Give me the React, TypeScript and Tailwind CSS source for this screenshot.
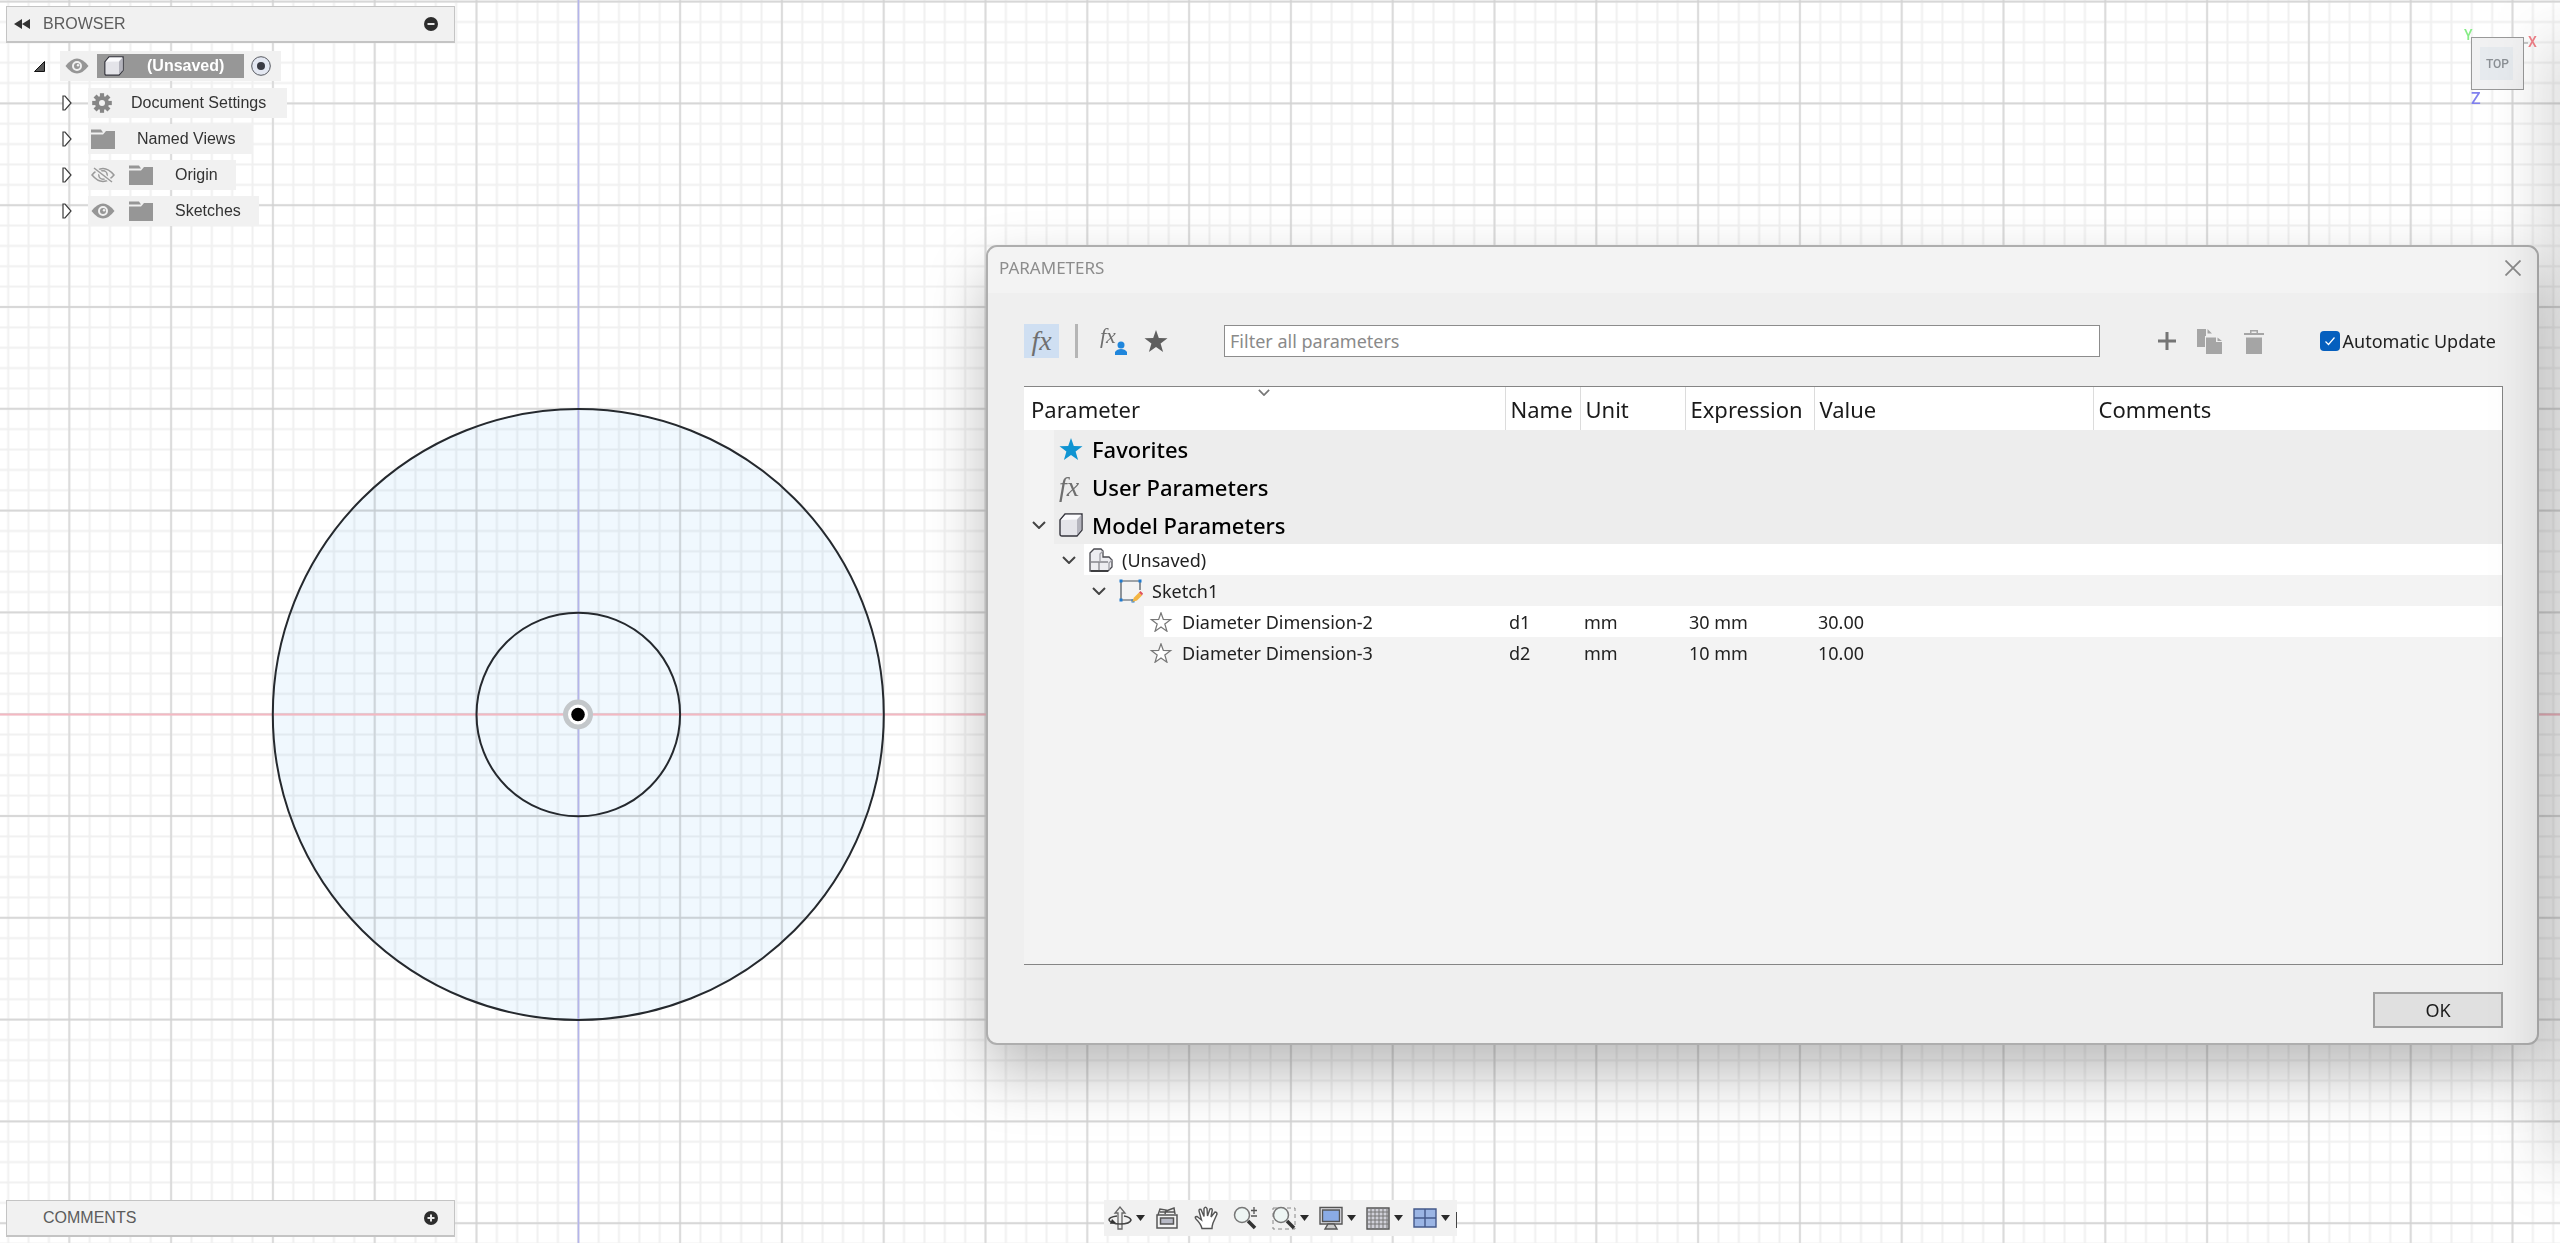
// src/App.tsx
import React from 'react';

type IconProps = { className?: string };

const EyeIcon: React.FC<{ hidden?: boolean }> = ({ hidden }) => (
  <svg className="h-4 w-6 shrink-0" viewBox="0 0 24 16">
    {hidden ? (
      <g fill="none" stroke="#9a9a9a" strokeWidth="1.5">
        <path d="M1 8 Q12 -5 23 8 Q12 21 1 8Z" />
        <circle cx="12" cy="8" r="4.2" />
        <path d="M3 1 L21 15" stroke="#f1f1f1" strokeWidth="4" />
        <path d="M3 1 L21 15" />
      </g>
    ) : (
      <g>
        <path d="M0.5 8 Q12 -7 23.5 8 Q12 23 0.5 8Z" fill="#969696" />
        <circle cx="12" cy="8" r="4" fill="#969696" stroke="#f1f1f1" strokeWidth="2" />
        <circle cx="13" cy="7.2" r="1.2" fill="#f1f1f1" />
      </g>
    )}
  </svg>
);

const FolderIcon: React.FC = () => (
  <svg className="h-5 w-6 shrink-0" viewBox="0 0 24 20" fill="#969696">
    <path d="M0 0.5 H10 L12 3.500 H0Z" />
    <path d="M0 5.5 H12 L15 2 H24 V20 H0Z" />
  </svg>
);

const GearIcon: React.FC = () => (
  <svg className="h-5 w-5 shrink-0" viewBox="-10 -10 20 20" fill="#868686">
    {[0, 45, 90, 135].map((angle) => (
      <rect key={angle} x="-2.1" y="-9.8" width="4.2" height="19.6" transform={`rotate(${angle})`} />
    ))}
    <circle r="7" />
    <circle r="3" fill="#f1f1f1" />
  </svg>
);

const CubeIcon: React.FC<IconProps> = ({ className }) => (
  <svg className={className} viewBox="0 0 24 24">
    <path d="M1 7 L6 1 H23 V17 L18 23 H3 Q1 23 1 21Z" fill="#e4e4e9" stroke="#34343c" strokeWidth="1.4" />
    <path d="M2 7 L6.500 1.800 H22 L18 6.500Z" fill="#fbfbfd" />
    <path d="M18 6.500 L22.300 2 V17 L18 22Z" fill="#b4b4bd" />
  </svg>
);

const ComponentIcon: React.FC = () => (
  <svg className="h-6 w-6 shrink-0" viewBox="0 0 24 24" strokeWidth="1.3" stroke="#4a4a50">
    <path d="M1 5 L5 1 H12 L14 3 V9 H20 L23 12 V19 L19 23 H1Z" fill="#ededf1" />
    <path d="M14 3 L11 6 V13 M23 12 L20 15 V22" fill="none" stroke="#a0a0a8" />
    <path d="M1 14 H19 M10 14 V23" fill="none" stroke="#85858c" />
    <path d="M2 23 H19" stroke="#222" />
  </svg>
);

const SketchIcon: React.FC = () => (
  <svg className="h-6 w-6 shrink-0" viewBox="0 0 24 24">
    <path d="M2 2 H21 V11 M2 2 V21 H14" fill="none" stroke="#48525c" strokeWidth="1.2" />
    <g fill="#1f7ad0">
      <rect x="0.500" y="0.500" width="3" height="3" />
      <rect x="19.500" y="0.500" width="3" height="3" />
      <rect x="0.500" y="19.500" width="3" height="3" />
      <rect x="12.500" y="20.500" width="3" height="3" />
    </g>
    <path d="M13 23 L15 18.500 L20 13.500 L23 16.500 L18 21.500Z" fill="#f3b544" />
    <path d="M20 13.500 L21.500 12 L24 14.500 L23 16.500Z" fill="#e0505a" />
  </svg>
);

const starPath = 'M12 1 L14.800 9 L23.500 9.200 L16.600 14.400 L19.100 23 L12 17.900 L4.900 23 L7.400 14.400 L0.500 9.200 L9.200 9Z';

const StarIcon: React.FC<IconProps> = ({ className }) => (
  <svg className={className} viewBox="0 0 24 24">
    <path d={starPath} />
  </svg>
);

const FxLabel: React.FC<IconProps> = ({ className }) => (
  <span className={`font-['Liberation_Serif',serif] italic text-[#6f6f6f] ${className}`}>fx</span>
);

const ChevronDown: React.FC<IconProps> = ({ className }) => (
  <svg className={className} viewBox="0 0 14 8" fill="none" stroke="currentColor" strokeWidth="2">
    <path d="M1 1 L7 7 L13 1" />
  </svg>
);

// Grid, axes and the sketched ring. The origin of the pattern is the sketch origin.
const SketchCanvas: React.FC = () => (
  <svg className="absolute inset-0 h-full w-full" aria-hidden="true">
    <defs>
      <pattern id="minor" x="568.12" y="704.02" width="20.36" height="20.36" patternUnits="userSpaceOnUse">
        <path d="M0 10.18 H20.36 M10.18 0 V20.36" stroke="#f0f0f0" strokeWidth="2" fill="none" />
      </pattern>
      <pattern id="major" x="527.4" y="663.3" width="101.8" height="101.8" patternUnits="userSpaceOnUse">
        <path d="M0 50.9 H101.8 M50.9 0 V101.8" stroke="#d0d0d0" strokeWidth="1.3" fill="none" />
      </pattern>
    </defs>
    <rect width="100%" height="100%" fill="#fff" />
    <circle cx="578.3" cy="714.2" r="305.5" fill="#f0f8fe" />
    <g className="mix-blend-multiply">
      <rect width="100%" height="100%" fill="url(#minor)" />
      <rect width="100%" height="100%" fill="url(#major)" />
    </g>
    <path d="M0 714.5 H2560" stroke="#f4b8c2" strokeWidth="2" />
    <path d="M578.5 0 V1243" stroke="#b4b4ec" strokeWidth="1.6" />
    <g fill="none" stroke="#25292e" strokeWidth="2">
      <circle cx="578.3" cy="714.5" r="305.5" />
      <circle cx="578.3" cy="714.5" r="101.8" />
    </g>
    <circle cx="578" cy="714.500" r="12.500" fill="#fff" stroke="#c3c7ca" strokeWidth="5" />
    <circle cx="578" cy="714.500" r="6.800" fill="#000" />
  </svg>
);

const ViewCube: React.FC = () => (
  <svg className="h-[80px] w-[76px]" viewBox="0 0 76 80" fontFamily="Roboto, sans-serif">
    <rect x="9.500" y="10.500" width="52" height="52" fill="#f1f1f2" stroke="#999" />
    <rect x="18" y="20" width="33" height="33" fill="#e6eaee" />
    <text x="35.500" y="41" fontSize="12" fontWeight="500" fill="#8b9095" textAnchor="middle">TOP</text>
    <text x="2" y="13" fontSize="14" fontWeight="500" fill="#86ec86">Y</text>
    <text x="66" y="20" fontSize="14" fontWeight="500" fill="#f08088">X</text>
    <text x="9" y="77" fontSize="16" fontWeight="500" fill="#8080ee">Z</text>
    <path d="M62 16 H66" stroke="#999" />
  </svg>
);

interface PanelBarProps {
  title: string;
  sign: 'minus' | 'plus';
  collapsible?: boolean;
}

const PanelBar: React.FC<PanelBarProps> = ({ title, sign, collapsible }) => (
  <div className="flex h-[37px] w-[449px] items-center border border-b-2 border-[#c4c4c4] bg-[#f1f1f1] pr-4 pl-[7px]">
    <button className="h-4 w-4" aria-label={`Collapse ${title}`}>
      {collapsible && (
        <svg viewBox="0 0 16 16" fill="#333">
          <path d="M8 3 V13 L0 8Z M16 3 V13 L8 8Z" />
        </svg>
      )}
    </button>
    <span className="ml-[13px] flex-1 text-[16px] text-[#5c5c5c]">{title}</span>
    <button className="h-[14px] w-[14px]" aria-label={sign === 'minus' ? 'Minimize' : 'Expand'}>
      <svg viewBox="0 0 14 14">
        <circle cx="7" cy="7" r="7" fill="#2d2d2d" />
        <path d={sign === 'minus' ? 'M3.500 7 H10.500' : 'M3.500 7 H10.500 M7 3.500 V10.500'} stroke="#e8e8e8" strokeWidth="2" />
      </svg>
    </button>
  </div>
);

interface BrowserRowProps {
  label: string;
  icons: React.ReactNode;
  labelClass: string;
}

const BrowserRow: React.FC<BrowserRowProps> = ({ label, icons, labelClass }) => (
  <li className="flex h-[30px] items-center">
    <button className="flex w-[27px] shrink-0 pl-px" aria-label={`Expand ${label}`}>
      <svg className="h-4 w-[10px]" viewBox="0 0 10 16" fill="#fff" stroke="#3a3a3a" strokeWidth="1.2">
        <path d="M1 1 H3 L9 8 L3 15 H1Z" />
      </svg>
    </button>
    <div className="flex h-full items-center bg-[#f1f1f1]">
      {icons}
      <span className={labelClass}>{label}</span>
    </div>
  </li>
);

const BrowserPanel: React.FC = () => (
  <section className="pt-[6px] pl-[6px]">
    <PanelBar title="BROWSER" sign="minus" collapsible />
    <div className="mt-2 ml-7 flex h-[30px] items-center">
      <button className="flex w-[26px]" aria-label="Collapse document">
        <svg className="h-[11px] w-[11px]" viewBox="0 0 11 11">
          <path d="M10.500 0.500 V10.500 H0.500Z" fill="#555" stroke="#111" />
        </svg>
      </button>
      <div className="flex h-full items-center bg-[#f1f1f1] pr-[10px] pl-[5px]">
        <EyeIcon />
        <div className="ml-2 flex h-6 w-[147px] items-center bg-[#979797] pl-[7px]">
          <CubeIcon className="h-5 w-5" />
          <span className="ml-[23px] text-[16px] font-bold text-white">(Unsaved)</span>
        </div>
        <svg className="ml-[7px] h-5 w-5" viewBox="0 0 20 20">
          <circle cx="10" cy="10" r="9.300" fill="#e4e8f2" stroke="#55585f" />
          <circle cx="10" cy="10" r="4" fill="#3a3c44" />
        </svg>
      </div>
    </div>
    <ul className="mt-[7px] ml-[55px] flex flex-col gap-[6px] text-[16px] text-[#333]">
      <BrowserRow label="Document Settings" icons={<span className="pl-1"><GearIcon /></span>} labelClass="pr-[21px] pl-[19px]" />
      <BrowserRow label="Named Views" icons={<span className="pl-[3px]"><FolderIcon /></span>} labelClass="pr-[18px] pl-[22px]" />
      <BrowserRow
        label="Origin"
        icons={<span className="flex items-center gap-[14px] pl-[3px]"><EyeIcon hidden /><FolderIcon /></span>}
        labelClass="pr-[18px] pl-[22px]"
      />
      <BrowserRow
        label="Sketches"
        icons={<span className="flex items-center gap-[14px] pl-[3px]"><EyeIcon /><FolderIcon /></span>}
        labelClass="pr-[18px] pl-[22px]"
      />
    </ul>
  </section>
);

interface Tool {
  name: string;
  menu: boolean;
  art: React.ReactNode;
}

const lens = (
  <>
    <circle cx="9" cy="9" r="7.500" fill="#eef6f4" stroke="#777" strokeWidth="1.500" />
    <path d="M15 15 L22 22" stroke="#333" strokeWidth="3.500" />
  </>
);

const tools: Tool[] = [
  {
    name: 'Orbit',
    menu: true,
    art: (
      <g fill="#eee" stroke="#666" strokeWidth="1.300">
        <path d="M10 23 V7 H7 L12 1 L17 7 H14 V23Z" />
        <path d="M9 10 Q1 11 1 14 Q3 18 12 18 Q22 18 23 14 Q22 11 16 10" fill="none" stroke="#444" strokeWidth="1.600" />
        <path d="M2 18 L8 17 L4 13Z" fill="#333" stroke="none" />
      </g>
    ),
  },
  {
    name: 'Look At',
    menu: false,
    art: (
      <g fill="none" stroke="#555" strokeWidth="1.500">
        <path d="M2 9 H22 V22 H2Z" fill="#f4f4f4" />
        <path d="M3 9 L5 3 L11 4 L10 8 M11 5 L19 2 L20 8 M5 6 H19" />
        <path d="M5.500 12 H18.500 V18 H5.500Z" fill="#b8bac6" />
      </g>
    ),
  },
  {
    name: 'Pan',
    menu: false,
    art: (
      <path
        d="M8 22.500 Q7 18 2 13 Q0 10.500 3 10.500 L7.500 14 L5 5 Q5 2.500 7 3.500 L10 10.500 L10 2.500 Q11.500 0 13 2.500 L13.500 10 L16 3 Q18 2 18.300 4 L17 11 L21 6 Q23 6 23 8 L19 17 Q18 20 18 22.500Z"
        fill="#fff"
        stroke="#555"
        strokeWidth="1.400"
      />
    ),
  },
  {
    name: 'Zoom',
    menu: false,
    art: <>{lens}<path d="M21 1 V8 M18 4.500 H24 M18 10 H24" stroke="#555" strokeWidth="1.300" /></>,
  },
  {
    name: 'Zoom Window',
    menu: true,
    art: <><path d="M1 2 H23 V23 H1Z" fill="none" stroke="#888" strokeDasharray="4 3" />{lens}</>,
  },
  {
    name: 'Display Settings',
    menu: true,
    art: (
      <g stroke="#555" strokeWidth="1.400">
        <path d="M1 1.500 H23 V18 H1Z" fill="#e8e8ee" />
        <path d="M3.500 4 H20.500 V15.500 H3.500Z" fill="#8aabe6" />
        <path d="M9 18 H15 L18 23 H6Z" fill="#ccc" />
      </g>
    ),
  },
  {
    name: 'Grid and Snaps',
    menu: true,
    art: (
      <g>
        <path d="M1 2 H23 V23 H1Z" fill="#d0d0d8" stroke="#555" strokeWidth="1.400" />
        <path d="M5 2 V23 M9 2 V23 M13 2 V23 M17 2 V23 M21 2 V23 M1 6 H23 M1 10 H23 M1 14 H23 M1 18 H23" stroke="#777" />
      </g>
    ),
  },
  {
    name: 'Viewports',
    menu: true,
    art: (
      <g fill="#9bb5e4" stroke="#44598a" strokeWidth="1.400">
        <path d="M1 3 H23 V21 H1Z M12 3 V21 M1 12 H23" />
      </g>
    ),
  },
];

const NavigationBar: React.FC = () => (
  <nav className="flex h-9 items-center gap-[10px] bg-[#f1f1f1] pl-1">
    {tools.map((tool) => (
      <button key={tool.name} className="flex items-center gap-1" aria-label={tool.name}>
        <svg className={tool.menu ? 'h-6 w-6' : 'mr-[5px] h-6 w-6'} viewBox="0 0 24 24">{tool.art}</svg>
        {tool.menu && (
          <svg className="h-[6px] w-[9px]" viewBox="0 0 9 6" fill="#2a2a2a">
            <path d="M0 0 H9 L4.500 6Z" />
          </svg>
        )}
      </button>
    ))}
    <span className="-ml-1 mt-1 h-4 w-px bg-[#444]" />
  </nav>
);

interface ParameterRow {
  label: string;
  level: 0 | 1 | 2 | 3;
  open?: boolean;
  icon: React.ReactNode;
  values?: string[];
}

const rows: ParameterRow[] = [
  { label: 'Favorites', level: 0, icon: <StarIcon className="h-6 w-6 fill-[#0f94d2]" /> },
  { label: 'User Parameters', level: 0, icon: <FxLabel className="w-6 text-[28px] leading-6" /> },
  { label: 'Model Parameters', level: 0, open: true, icon: <CubeIcon className="h-6 w-6" /> },
  { label: '(Unsaved)', level: 1, open: true, icon: <ComponentIcon /> },
  { label: 'Sketch1', level: 2, open: true, icon: <SketchIcon /> },
  {
    label: 'Diameter Dimension-2',
    level: 3,
    icon: <StarIcon className="h-5 w-6 fill-white stroke-[#777] stroke-[1.5]" />,
    values: ['d1', 'mm', '30 mm', '30.00', ''],
  },
  {
    label: 'Diameter Dimension-3',
    level: 3,
    icon: <StarIcon className="h-5 w-6 fill-white stroke-[#777] stroke-[1.5]" />,
    values: ['d2', 'mm', '10 mm', '10.00', ''],
  },
];

const indents = ['w-[30px]', 'w-[60px]', 'w-[90px]', 'w-[120px]'];
const columns = ['Name', 'Unit', 'Expression', 'Value', 'Comments'];

const ParameterTable: React.FC = () => (
  <table className="w-full table-fixed border-collapse text-left">
    <colgroup>
      <col className="w-[481px]" />
      <col className="w-[75px]" />
      <col className="w-[105px]" />
      <col className="w-[129px]" />
      <col className="w-[279px]" />
      <col />
    </colgroup>
    <thead>
      <tr className="h-[43px] bg-white text-[22px] leading-7 text-[#1a1a1a]">
        <th className="relative py-0 pl-[7px] font-normal">
          Parameter
          <ChevronDown className="absolute top-[2px] left-1/2 h-[7px] w-3 -translate-x-1/2 text-[#777]" />
        </th>
        {columns.map((column) => (
          <th key={column} className="border-l border-[#dcdcdc] py-0 pl-[5px] font-normal">{column}</th>
        ))}
      </tr>
    </thead>
    <tbody>
      {rows.map((row, index) => {
        const fill = row.level === 0 ? 'bg-[#ededed]' : index % 2 ? 'bg-white' : 'bg-[#f3f3f3]';
        const height = row.level === 0 ? 'h-[38px]' : 'h-[31px]';
        const text = row.level === 0 ? 'text-[22px] leading-7 font-medium text-black' : 'text-[18px] leading-7 text-[#222]';
        return (
          <tr key={row.label} className={text}>
            <td className="p-0">
              <div className={`flex ${height}`}>
                <span className={`flex shrink-0 items-center justify-end pr-2 ${indents[row.level]}`}>
                  {row.open && <ChevronDown className="h-2 w-[14px] text-[#444]" />}
                </span>
                <span className={`flex flex-1 items-center gap-[9px] pl-[5px] ${fill}`}>
                  {row.icon}
                  {row.label}
                </span>
              </div>
            </td>
            {(row.values ?? ['', '', '', '', '']).map((value, column) => (
              <td key={columns[column]} className={`py-0 pl-1 ${fill}`}>{value}</td>
            ))}
          </tr>
        );
      })}
    </tbody>
  </table>
);

const ParametersDialog: React.FC = () => (
  <section
    role="dialog"
    aria-label="Parameters"
    className="absolute top-[245px] right-[21px] left-[986px] rounded-[11px] border-2 border-[#aeaeae] bg-[#efefef] pb-[15px] font-['Noto_Sans',sans-serif] shadow-[0_28px_60px_rgba(0,0,0,0.27)]"
  >
    <header className="flex h-[46px] items-center justify-between rounded-t-[10px] bg-[#f3f3f3] pr-4 pb-[5px] pl-[11px]">
      <h2 className="text-[17px] text-[#8c8c8c]">PARAMETERS</h2>
      <button aria-label="Close">
        <svg className="h-4 w-4" viewBox="0 0 16 16" stroke="#8a8a8a" strokeWidth="1.800">
          <path d="M0.500 0.500 L15.500 15.500 M15.500 0.500 L0.500 15.500" />
        </svg>
      </button>
    </header>

    <div className="pt-[31px] pr-[34px] pl-[36px]">
      <div className="flex h-[34px] items-center">
        <button className="h-[34px] w-[35px] bg-[#cfdff2]" aria-label="All parameters">
          <FxLabel className="text-[28px] leading-7" />
        </button>
        <span className="ml-4 h-[34px] w-[3px] bg-[#b5b5b5]" />
        <button className="relative ml-[22px] flex h-7 w-7" aria-label="User parameters">
          <FxLabel className="text-[22px] leading-[18px]" />
          <svg className="absolute right-0 bottom-0 h-[14px] w-[14px]" viewBox="0 0 14 14" fill="#1f86dc">
            <circle cx="7" cy="4" r="3.500" />
            <path d="M1 14 V11 Q3 8 7 8 Q11 8 13 11 V14Z" />
          </svg>
        </button>
        <button className="ml-4" aria-label="Favorites">
          <StarIcon className="h-6 w-6 fill-[#5e5e5e]" />
        </button>
        <input
          type="text"
          aria-label="Filter"
          placeholder="Filter all parameters"
          className="ml-14 h-8 min-w-0 flex-1 border border-[#8c8c8c] bg-white px-[5px] text-[18px] placeholder:text-[#8a8a8a]"
        />
        <button className="ml-[57px]" aria-label="Add">
          <svg className="h-5 w-5" viewBox="0 0 20 20" stroke="#757575" strokeWidth="3">
            <path d="M10 1 V19 M1 10 H19" />
          </svg>
        </button>
        <button className="ml-5" aria-label="Duplicate">
          <svg className="h-[25px] w-[25px]" viewBox="0 0 25 25" fill="#a5a5a5">
            <path d="M0 0 H9 V7 H8 V18 H0Z M10.500 0 L15 4.500 H10.500Z" />
            <path d="M9 8.500 H19 V13 H25 V25 H9Z M20.500 8.500 L25 12 H20.500Z" />
          </svg>
        </button>
        <button className="ml-[22px]" aria-label="Delete">
          <svg className="h-[25px] w-5" viewBox="0 0 20 25" fill="#a5a5a5">
            <path d="M0 4 H6 V1 H14 V4 H20 V6 H0Z M7.500 2.500 V4 H12.500 V2.500Z" fillRule="evenodd" />
            <path d="M2 8.500 H18 V25 H2Z" />
          </svg>
        </button>
        <label className="mr-[7px] ml-[56px] flex items-center gap-[3px] text-[18px] text-[#222]">
          <span className="relative flex">
            <input type="checkbox" defaultChecked className="h-5 w-5 appearance-none rounded-[4px] bg-[#055fbe]" />
            <svg className="pointer-events-none absolute inset-0 h-5 w-5" viewBox="0 0 20 20" fill="none" stroke="#fff" strokeWidth="1.200">
              <path d="M5.500 10.500 L8.500 13.500 L14.500 6.500" />
            </svg>
          </span>
          Automatic Update
        </label>
      </div>

      <div className="mt-7 min-h-[579px] border-t border-r border-b border-[#858585] bg-[#f3f3f3]">
        <ParameterTable />
      </div>

      <div className="mt-[27px] flex justify-end">
        <button className="h-9 w-[130px] border-2 border-[#a0a0a0] bg-[#e0e0e0] text-[18px] text-[#1a1a1a]">OK</button>
      </div>
    </div>
  </section>
);

const App: React.FC = () => (
  <main className="relative flex min-h-screen flex-col justify-between overflow-hidden bg-white font-['Liberation_Sans',Arial,sans-serif]">
    <SketchCanvas />

    <div className="relative flex items-start justify-between">
      <BrowserPanel />
      <div className="pt-[27px] pr-[22px]">
        <ViewCube />
      </div>
    </div>

    <footer className="relative grid grid-cols-[1fr_auto_1fr] items-start px-[6px] pb-[6px]">
      <PanelBar title="COMMENTS" sign="plus" />
      <NavigationBar />
    </footer>

    <ParametersDialog />

    {/* Shade cast by the panel docked beyond the right edge */}
    <div className="pointer-events-none absolute top-10 -right-3 bottom-20 w-3 shadow-[0_0_60px_rgba(0,0,0,0.6)]" />
  </main>
);

export default App;
